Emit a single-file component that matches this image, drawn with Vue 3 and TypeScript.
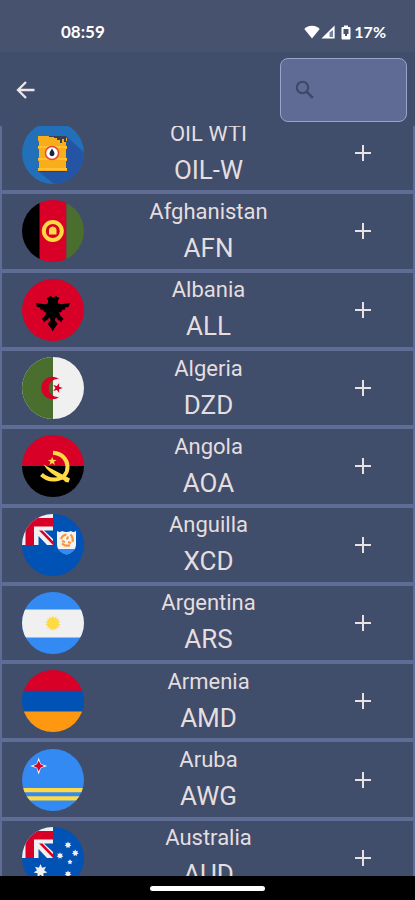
<script setup lang="ts">
import { ref } from 'vue'

interface Currency {
  country: string
  code: string
  flag: string
}

const currencies: Currency[] = [
  { country: 'OIL WTI', code: 'OIL-W', flag: 'oil' },
  { country: 'Afghanistan', code: 'AFN', flag: 'af' },
  { country: 'Albania', code: 'ALL', flag: 'al' },
  { country: 'Algeria', code: 'DZD', flag: 'dz' },
  { country: 'Angola', code: 'AOA', flag: 'ao' },
  { country: 'Anguilla', code: 'XCD', flag: 'ai' },
  { country: 'Argentina', code: 'ARS', flag: 'ar' },
  { country: 'Armenia', code: 'AMD', flag: 'am' },
  { country: 'Aruba', code: 'AWG', flag: 'aw' },
  { country: 'Australia', code: 'AUD', flag: 'au' },
]

const query = ref('')

// Points of a regular star with its first tip pointing up.
function star(cx: number, cy: number, tips: number, outer: number, inner: number): string {
  const points: string[] = []
  for (let i = 0; i < tips * 2; i++) {
    const r = i % 2 === 0 ? outer : inner
    const a = (Math.PI * i) / tips - Math.PI / 2
    points.push(`${(cx + r * Math.cos(a)).toFixed(2)},${(cy + r * Math.sin(a)).toFixed(2)}`)
  }
  return points.join(' ')
}
</script>

<template>
  <div class="screen">
    <div class="status">
      <span class="clock">08:59</span>
      <span class="indicators">
        <svg class="wifi" viewBox="0 0 16 14" aria-hidden="true">
          <path d="M8 13.5 0.3 4C2.4 2 5 .8 8 .8S13.6 2 15.7 4Z" fill="#fff" />
        </svg>
        <svg class="signal" viewBox="0 0 14 14" aria-hidden="true">
          <path d="M13.6.4V13.6H.4Z" fill="#fff" />
          <path d="M12 5V12H8.5V7.5Z" fill="#7782a2" />
        </svg>
        <svg class="battery" viewBox="0 0 10 15" aria-hidden="true">
          <path d="M3 .5h4V2h1.500q1 0 1 1v10.500q0 1-1 1h-7q-1 0-1-1V3q0-1 1-1H3Z" fill="#fff" />
          <path d="M2.500 4h5v5h-5Z" fill="#47526f" />
          <path d="M4 6h2v5H4Z" fill="#47526f" />
        </svg>
        <span class="level">17%</span>
      </span>
    </div>

    <header class="toolbar">
      <button class="back" type="button" aria-label="Back">
        <svg viewBox="0 0 24 24" aria-hidden="true">
          <path d="M20.500 12H4.500M12 4 4 12l8 8" fill="none" stroke="#eee5e6" stroke-width="2.300" />
        </svg>
      </button>
      <label class="search">
        <svg viewBox="0 0 24 24" aria-hidden="true">
          <circle cx="9.500" cy="9.500" r="5.700" fill="none" stroke="#3d4866" stroke-width="2" />
          <path d="m13.800 13.800 6 6" stroke="#3d4866" stroke-width="2.500" />
        </svg>
        <input v-model="query" type="search" aria-label="Search currencies" />
      </label>
    </header>

    <main class="content">
      <ul class="list">
        <li v-for="item in currencies" :key="item.code" class="row">
          <svg class="flag" viewBox="0 0 62 62" aria-hidden="true">
            <g v-if="item.flag === 'oil'">
              <path d="M0 0h62v62H0Z" fill="#2170b9" />
              <path d="M44 14 64 32v30H32L16 49Z" fill="#2455a4" />
              <path d="M17 45h27v5H17Z" fill="#1c4580" />
              <path d="M16 14h28v2h1v3h-1v5h1v3h-1v9h1v3h-1v7h1v3H16v-3h1v-7h-1v-3h1v-9h-1v-3h1v-5h-1Z" fill="#f9ad1b" />
              <path d="M16 25h29M16 37h29M16 47h29" stroke="#ffc93e" stroke-width="1.500" />
              <path d="M27 14h17v6h-2v-3h-2v4h-2v-3h-3v-2h-3v-1h-5Z" fill="#384052" />
              <circle cx="30" cy="31" r="6.500" fill="#fff" stroke="#e64b32" stroke-width="1.500" />
              <path d="M30 26.500q5 7 0 7.800-5-.8 0-7.800Z" fill="#17243c" />
            </g>
            <g v-else-if="item.flag === 'af'">
              <path d="M0 0h18v62H0Z" fill="#000" />
              <path d="M17.500 0h27v62h-27Z" fill="#d80027" />
              <path d="M44.500 0H62v62H44.500Z" fill="#496e2d" />
              <circle cx="30.800" cy="31" r="9" fill="none" stroke="#ffda44" stroke-width="4" />
              <path d="M27 34.500V30q0-3 3.800-3.500Q34.500 27 34.500 30v4.500Z" fill="#ffda44" />
            </g>
            <g v-else-if="item.flag === 'al'">
              <path d="M0 0h62v62H0Z" fill="#d80027" />
              <path
                d="M24.500 19.500 28 17l3 1.500 3-1.500 3.500 2.500L36 21v3.500l3.500.8L48 24l-1.500 4-3.300.4-.2 2-3 .6-.5 2-2.500.6 1.500 3.500 3.200 3-1.400 1-.8 2.400-2-2-1.200-.3-2.300-3-1.300 3 3 3.500-3.500 5-1.500 2.500-1.500-2.500-3.500-5 3-3.500-1.300-3-2.300 3-1.200.3-2 2-.8-2.400-1.400-1 3.200-3 1.500-3.500-2.500-.6-.5-2-3-.6-.2-2-3.300-.4L14 24l8.500 1.300 3.500-.8V21Z"
                fill="#000"
              />
            </g>
            <g v-else-if="item.flag === 'dz'">
              <path d="M0 0h62v62H0Z" fill="#f0f0f0" />
              <path d="M0 0h31v62H0Z" fill="#496e2d" />
              <path d="M37.500 22.300A11.200 11.200 0 1 0 37.500 39.700 8.900 8.900 0 1 1 37.500 22.300Z" fill="#d80027" />
              <polygon :points="star(35.5, 31, 5, 5.3, 2)" fill="#d80027" transform="rotate(18 35.5 31)" />
            </g>
            <g v-else-if="item.flag === 'ao'">
              <path d="M0 0h62v31H0Z" fill="#d80027" />
              <path d="M0 31h62v31H0Z" fill="#000" />
              <path d="M31 17.800C50 19 50 44 33 44.500Q25 45 19.500 39.500" fill="none" stroke="#ffda44" stroke-width="4" />
              <path d="M21.500 29.500 45 42l3 1.500-1.500 4-3-.5-2-2Q27 39 21.500 29.500Z" fill="#ffda44" />
              <polygon :points="star(30.2, 26.3, 5, 4.6, 1.8)" fill="#ffda44" />
            </g>
            <g v-else-if="item.flag === 'ai' || item.flag === 'au'">
              <path d="M0 0h62v62H0Z" fill="#0052b4" />
              <path d="M0 0h31v31H0Z" fill="#f0f0f0" />
              <path d="M3.500 4H31v8.500H12V31H3.500Z" fill="#d80027" />
              <path d="M22 16.500h9V25ZM16.500 22v9H25Z" fill="#0052b4" />
              <path d="M17 16.500h3.500L31 27.300V31Z" fill="#d80027" />
              <g v-if="item.flag === 'ai'">
                <path d="M35 17q3 1.800 5 0 4.500 2 9 0 2.500 1.800 5 0v14q0 6-9.500 9.500Q35 37 35 31Z" fill="#f3f3f3" />
                <path d="M36 35h17q-2 3.500-8.500 5.500Q38 38.500 36 35Z" fill="#338af3" />
                <path
                  d="M39 25q1.500-4 5.500-4.500M48.500 20.500q3 3 2 7.500M48 31q-4 2-8-1.500M40 27l3 1M46 22.500l-1 3M49 29l-3-1"
                  fill="none"
                  stroke="#ff9331"
                  stroke-width="2.200"
                />
              </g>
              <g v-else fill="#f0f0f0">
                <polygon :points="star(18.5, 44, 7, 7, 3.7)" />
                <polygon :points="star(46, 18, 7, 3.5, 2)" />
                <polygon :points="star(38, 28.7, 7, 3.5, 2)" />
                <polygon :points="star(53.3, 26, 7, 3.5, 2)" />
                <polygon :points="star(48, 35, 5, 2.7, 1.4)" />
                <polygon :points="star(46, 47, 7, 3.5, 2)" />
              </g>
            </g>
            <g v-else-if="item.flag === 'ar'">
              <path d="M0 0h62v62H0Z" fill="#338af3" />
              <path d="M0 17.500h62v28H0Z" fill="#f0f0f0" />
              <polygon :points="star(31, 31.3, 14, 7.8, 5.5)" fill="#ffda44" />
            </g>
            <g v-else-if="item.flag === 'am'">
              <path d="M0 0h62v21H0Z" fill="#d80027" />
              <path d="M0 20.700h62v21H0Z" fill="#0052b4" />
              <path d="M0 41.500h62V62H0Z" fill="#ff9811" />
            </g>
            <g v-else-if="item.flag === 'aw'">
              <path d="M0 0h62v62H0Z" fill="#338af3" />
              <path d="M0 39h62v4.300H0ZM0 47.200h62v4.300H0Z" fill="#ffda44" />
              <polygon :points="star(16.7, 17, 4, 8.5, 3)" fill="#fff" />
              <polygon :points="star(16.7, 17, 4, 5.5, 2.5)" fill="#d80027" />
            </g>
          </svg>
          <div class="labels">
            <span class="country">{{ item.country }}</span>
            <span class="code">{{ item.code }}</span>
          </div>
          <button class="add" type="button" :aria-label="`Add ${item.code}`">
            <svg viewBox="0 0 16 16" aria-hidden="true">
              <path d="M8 0v16M0 8h16" stroke="#e9e2e2" stroke-width="2" />
            </svg>
          </button>
        </li>
      </ul>
    </main>

    <div class="gesture"><span class="pill"></span></div>
  </div>
</template>

<style>
body {
  background: #404d6b;
}
</style>

<style scoped>
.screen {
  display: flex;
  flex-direction: column;
  height: 100vh;
  background: #404d6b;
  color: #e4dedf;
  font-family: Roboto, sans-serif;
}

.status {
  display: flex;
  align-items: center;
  justify-content: space-between;
  box-sizing: border-box;
  height: 52px;
  padding: 12px 29px 0 61px;
  background: #47526f;
  color: #fff;
  font-family: Lato, sans-serif;
  font-size: 17px;
  font-weight: 700;
  line-height: 20px;
}

.indicators {
  display: flex;
  align-items: center;
}

.wifi {
  width: 16px;
  height: 14px;
  margin-right: 1px;
}

.signal {
  width: 14px;
  height: 14px;
  margin-right: 6px;
}

.battery {
  width: 10px;
  height: 15px;
  margin-right: 3px;
}

.level {
  font-size: 16px;
}

.toolbar {
  display: flex;
  align-items: center;
  justify-content: space-between;
  box-sizing: border-box;
  height: 74px;
  padding: 2px 8px 0 14px;
}

button {
  display: grid;
  place-items: center;
  padding: 0;
  border: 0;
  background: none;
  cursor: pointer;
}

.back {
  width: 24px;
  height: 48px;
}

.back svg {
  width: 24px;
  height: 24px;
}

.search {
  display: flex;
  align-items: center;
  gap: 8px;
  box-sizing: border-box;
  width: 127px;
  height: 64px;
  padding: 0 12px;
  border: 1px solid #98a4c9;
  border-radius: 8px;
  background: #5f6b94;
}

.search svg {
  flex: none;
  width: 24px;
  height: 24px;
}

.search input {
  flex: 1;
  min-width: 0;
  padding: 0;
  border: 0;
  outline: 0;
  background: none;
  color: #e4dedf;
  font: 16px Roboto, sans-serif;
}

.content {
  display: flex;
  flex: 1;
  flex-direction: column;
  min-height: 0;
  overflow: hidden auto;
  scrollbar-width: none;
}

.list {
  display: grid;
  flex: 1;
  grid-auto-rows: 1fr;
  margin: -12px 0 -21px;
  padding: 0;
  list-style: none;
}

.row {
  display: grid;
  grid-template-columns: 102px 1fr 100px;
  align-items: center;
  justify-items: center;
  border: 2px solid #5f6c96;
}

.flag {
  width: 62px;
  height: 62px;
  border-radius: 50%;
  overflow: hidden;
}

.labels {
  display: flex;
  flex-direction: column;
  align-items: center;
}

.country {
  font-size: 22px;
  line-height: 33px;
}

.code {
  font-size: 26px;
  line-height: 40px;
}

.add {
  width: 48px;
  height: 48px;
}

.add svg {
  width: 16px;
  height: 16px;
}

.gesture {
  display: flex;
  align-items: center;
  justify-content: center;
  height: 24px;
  background: #000;
}

.pill {
  width: 115px;
  height: 5px;
  border-radius: 3px;
  background: #fff;
}
</style>
